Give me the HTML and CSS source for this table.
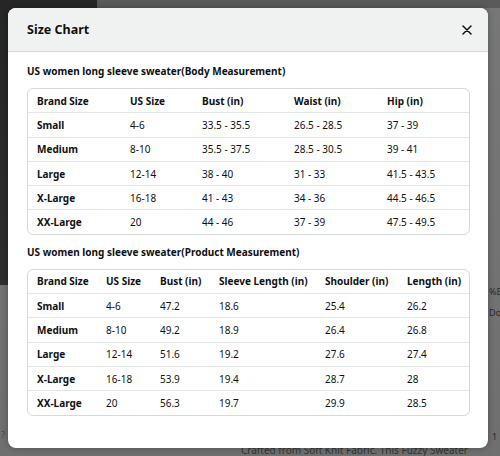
FILE: index.html
```html
<!DOCTYPE html>
<html lang="en">

<head>
    <meta charset="UTF-8">
    <meta name="viewport" content="width=device-width, initial-scale=1.0">
    <title>Size Chart</title>
    <link rel="stylesheet" href="styles.css">
</head>

<body>

    <div class="backdrop">
        <span class="peek peek-q">?</span>
        <span class="peek peek-e">%E</span>
        <span class="peek peek-do">Do</span>
        <span class="peek peek-one">1</span>
        <span class="peek peek-crafted">Crafted from Soft Knit Fabric. This Fuzzy Sweater</span>
    </div>

    <div class="modal">
        <div class="modal-header">
            <h2>Size Chart</h2>
            <button class="close" aria-label="Close">
                <svg width="10" height="10" viewBox="0 0 10 10">
                    <path d="M1 1 L9 9 M9 1 L1 9" stroke="#0f1111" stroke-width="1.5" stroke-linecap="round" />
                </svg>
            </button>
        </div>

        <div class="modal-body">
            <h3>US women long sleeve sweater(Body Measurement)</h3>
            <div class="table-box">
                <table class="body-table">
                    <tr>
                        <th>Brand Size</th>
                        <th>US Size</th>
                        <th>Bust (in)</th>
                        <th>Waist (in)</th>
                        <th>Hip (in)</th>
                    </tr>
                    <tr>
                        <th>Small</th>
                        <td>4-6</td>
                        <td>33.5 - 35.5</td>
                        <td>26.5 - 28.5</td>
                        <td>37 - 39</td>
                    </tr>
                    <tr>
                        <th>Medium</th>
                        <td>8-10</td>
                        <td>35.5 - 37.5</td>
                        <td>28.5 - 30.5</td>
                        <td>39 - 41</td>
                    </tr>
                    <tr>
                        <th>Large</th>
                        <td>12-14</td>
                        <td>38 - 40</td>
                        <td>31 - 33</td>
                        <td>41.5 - 43.5</td>
                    </tr>
                    <tr>
                        <th>X-Large</th>
                        <td>16-18</td>
                        <td>41 - 43</td>
                        <td>34 - 36</td>
                        <td>44.5 - 46.5</td>
                    </tr>
                    <tr>
                        <th>XX-Large</th>
                        <td>20</td>
                        <td>44 - 46</td>
                        <td>37 - 39</td>
                        <td>47.5 - 49.5</td>
                    </tr>
                </table>
            </div>

            <h3>US women long sleeve sweater(Product Measurement)</h3>
            <div class="table-box">
                <table class="product-table">
                    <tr>
                        <th>Brand Size</th>
                        <th>US Size</th>
                        <th>Bust (in)</th>
                        <th>Sleeve Length (in)</th>
                        <th>Shoulder (in)</th>
                        <th>Length (in)</th>
                    </tr>
                    <tr>
                        <th>Small</th>
                        <td>4-6</td>
                        <td>47.2</td>
                        <td>18.6</td>
                        <td>25.4</td>
                        <td>26.2</td>
                    </tr>
                    <tr>
                        <th>Medium</th>
                        <td>8-10</td>
                        <td>49.2</td>
                        <td>18.9</td>
                        <td>26.4</td>
                        <td>26.8</td>
                    </tr>
                    <tr>
                        <th>Large</th>
                        <td>12-14</td>
                        <td>51.6</td>
                        <td>19.2</td>
                        <td>27.6</td>
                        <td>27.4</td>
                    </tr>
                    <tr>
                        <th>X-Large</th>
                        <td>16-18</td>
                        <td>53.9</td>
                        <td>19.4</td>
                        <td>28.7</td>
                        <td>28</td>
                    </tr>
                    <tr>
                        <th>XX-Large</th>
                        <td>20</td>
                        <td>56.3</td>
                        <td>19.7</td>
                        <td>29.9</td>
                        <td>28.5</td>
                    </tr>
                </table>
            </div>
        </div>
    </div>

</body>

</html>
```

FILE: styles.css
```css
body {
    margin: 0;
    width: 500px;
    height: 456px;
    overflow: hidden;
    position: relative;
    font-family: 'Noto Sans', 'Open Sans', sans-serif;
    color: #0f1111;
    background: #6e6e6e;
}

/* dimmed page behind the popup */
.backdrop {
    position: absolute;
    inset: 0;
    background:
        linear-gradient(#262626, #2e2e2e) 0 0 / 97px 285px no-repeat,
        linear-gradient(#5a5a5a, #5a5a5a) 97px 0 / 403px 8px no-repeat,
        linear-gradient(#777777, #6f6f6f);
}

.peek {
    position: absolute;
    font-size: 9px;
    line-height: 11px;
    color: #2a2a2a;
    white-space: nowrap;
}

.peek-q {
    left: 1px;
    top: 429px;
    color: #2b4a6e;
}

.peek-e {
    left: 489px;
    top: 286px;
}

.peek-do {
    left: 489px;
    top: 307px;
}

.peek-one {
    left: 492px;
    top: 431px;
}

.peek-crafted {
    left: 241px;
    top: 445px;
    font-size: 10px;
    color: #333333;
}

.modal {
    position: absolute;
    left: 8px;
    top: 8px;
    width: 480px;
    height: 440px;
    background: #ffffff;
    border-radius: 8px;
    overflow: hidden;
    box-shadow: 0 0 6px rgba(0, 0, 0, 0.3);
}

.modal-header {
    display: flex;
    align-items: center;
    justify-content: space-between;
    height: 43px;
    padding: 0 16px 0 19px;
    background: #f0f2f2;
    border-bottom: 1px solid #d5d9d9;
}

.modal-header h2 {
    margin: 0;
    font-size: 12.5px;
    font-weight: 700;
}

.close {
    border: none;
    background: none;
    padding: 0;
    width: 10px;
    height: 10px;
    display: flex;
    align-items: center;
    justify-content: center;
    cursor: pointer;
}

.modal-body {
    padding: 12px 18px 0 19px;
}

.modal-body h3 {
    margin: 0 0 9px;
    font-size: 10px;
    font-weight: 700;
    line-height: 15px;
}

.table-box {
    border: 1px solid #d5d9d9;
    border-radius: 6px;
    overflow: hidden;
    margin-bottom: 10px;
}

table {
    width: 100%;
    border-collapse: collapse;
    font-size: 10px;
}

th,
td {
    text-align: left;
    padding: 0 0 0 9px;
    height: 23.3px;
    line-height: 14px;
    border-top: 1px solid #e3e6e6;
    white-space: nowrap;
}

tr:first-child th {
    border-top: none;
}

th {
    font-weight: 700;
}

td {
    font-weight: 400;
}

.body-table th:nth-child(1) {
    width: 84px;
}

.body-table tr:first-child th:nth-child(2) {
    width: 63px;
}

.body-table tr:first-child th:nth-child(3) {
    width: 83px;
}

.body-table tr:first-child th:nth-child(4) {
    width: 84px;
}

.product-table th:nth-child(1) {
    width: 60px;
}

.product-table tr:first-child th:nth-child(2) {
    width: 45px;
}

.product-table tr:first-child th:nth-child(3) {
    width: 50px;
}

.product-table tr:first-child th:nth-child(4) {
    width: 97px;
}

.product-table tr:first-child th:nth-child(5) {
    width: 73px;
}
```
